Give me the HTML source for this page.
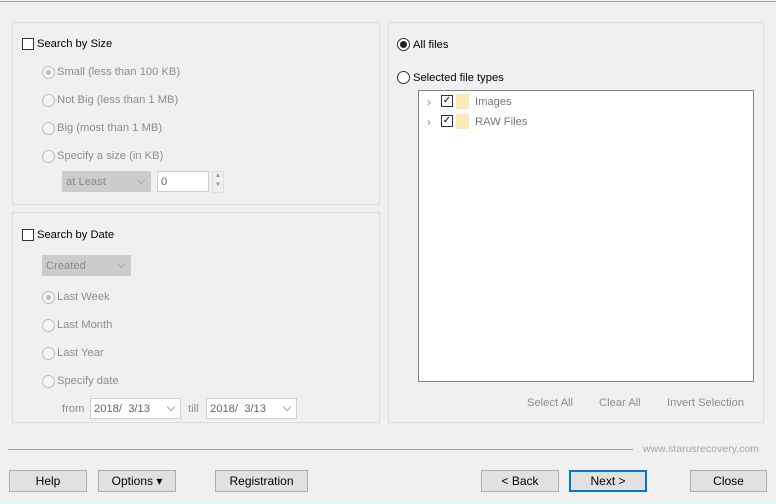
<!DOCTYPE html>
<html><head><style>
body{margin:0;width:776px;height:504px;background:#f0f0f0;font-family:"Liberation Sans",sans-serif;font-size:11.2px;color:#000;position:relative;overflow:hidden}
.a{position:absolute;white-space:nowrap;line-height:16px}
.panel{position:absolute;border:1px solid #dcdcdc;box-sizing:border-box}
.cb{position:absolute;width:12px;height:12px;border:1px solid #333;background:#fff;box-sizing:border-box}
.rd{position:absolute;width:13px;height:13px;border:1px solid #bcbcbc;border-radius:50%;box-sizing:border-box;background:#f4f4f4}
.g{color:#8d8d8d}
.btn{position:absolute;height:22px;border:1px solid #adadad;background:#e1e1e1;box-sizing:border-box;text-align:center;line-height:21px;font-size:12px}
.sel{position:absolute;height:21px;border:1px solid #cfcfcf;box-sizing:border-box;background:#fff;color:#7a7a7a;padding-left:3px;line-height:20px}
.chev{position:absolute;right:6px;top:5px;width:5px;height:5px;border-right:1px solid #aaa;border-bottom:1px solid #aaa;transform:rotate(45deg)}
</style></head><body>
<div class="a" style="left:0;top:1px;width:776px;height:1px;background:#a0a0a0"></div>

<div class="panel" style="left:12px;top:22px;width:368px;height:183px"></div>
<div class="cb" style="left:22px;top:38px"></div><div class="a" style="left:37px;top:36px">Search by Size</div>
<div class="rd" style="left:42px;top:66px"><div style="position:absolute;left:3px;top:3px;width:5px;height:5px;border-radius:50%;background:#bcbcbc"></div></div><div class="a g" style="left:57px;top:64px">Small (less than 100 KB)</div>
<div class="rd" style="left:42px;top:94px"></div><div class="a g" style="left:57px;top:92px">Not Big (less than 1 MB)</div>
<div class="rd" style="left:42px;top:122px"></div><div class="a g" style="left:57px;top:120px">Big (most than 1 MB)</div>
<div class="rd" style="left:42px;top:150px"></div><div class="a g" style="left:57px;top:148px">Specify a size (in KB)</div>
<div class="sel" style="left:62px;top:171px;width:89px;background:#cccccc;border-color:#cccccc;color:#888">at Least<div class="chev"></div></div>
<div class="sel" style="left:157px;top:171px;width:52px;color:#666">0</div>
<div class="a g" style="left:212px;top:171px;width:10px;height:20px;border:1px solid #ddd;font-size:6px;text-align:center;line-height:9px">▲<br>▼</div>

<div class="panel" style="left:12px;top:212px;width:368px;height:211px"></div>
<div class="cb" style="left:22px;top:229px"></div><div class="a" style="left:37px;top:227px">Search by Date</div>
<div class="sel" style="left:42px;top:255px;width:89px;background:#cccccc;border-color:#cccccc;color:#888">Created<div class="chev"></div></div>
<div class="rd" style="left:42px;top:291px"><div style="position:absolute;left:3px;top:3px;width:5px;height:5px;border-radius:50%;background:#bcbcbc"></div></div><div class="a g" style="left:57px;top:289px">Last Week</div>
<div class="rd" style="left:42px;top:319px"></div><div class="a g" style="left:57px;top:317px">Last Month</div>
<div class="rd" style="left:42px;top:347px"></div><div class="a g" style="left:57px;top:345px">Last Year</div>
<div class="rd" style="left:42px;top:375px"></div><div class="a g" style="left:57px;top:373px">Specify date</div>
<div class="a g" style="left:62px;top:401px">from</div>
<div class="sel" style="left:90px;top:398px;width:91px;color:#666">2018/ &nbsp;3/13<div class="chev"></div></div>
<div class="a g" style="left:188px;top:401px">till</div>
<div class="sel" style="left:206px;top:398px;width:91px;color:#666">2018/ &nbsp;3/13<div class="chev"></div></div>

<div class="panel" style="left:388px;top:22px;width:376px;height:401px"></div>
<div class="rd" style="left:397px;top:38px;border-color:#333;background:#fff"><div style="position:absolute;left:2px;top:2px;width:7px;height:7px;border-radius:50%;background:#222"></div></div><div class="a" style="left:413px;top:37px">All files</div>
<div class="rd" style="left:397px;top:71px;border-color:#333;background:#fff"></div><div class="a" style="left:413px;top:70px">Selected file types</div>
<div class="a" style="left:418px;top:90px;width:336px;height:292px;border:1px solid #828282;background:#fff;box-sizing:border-box"></div>
<div class="a g" style="left:427px;top:94px;font-size:12px">›</div>
<div class="cb" style="left:441px;top:95px;font-size:10px;line-height:10px;text-align:center">✓</div>
<div class="a" style="left:456px;top:94px;width:13px;height:15px;background:#fbeab4"></div>
<div class="a g" style="left:475px;top:94px;color:#777">Images</div>
<div class="a g" style="left:427px;top:114px;font-size:12px">›</div>
<div class="cb" style="left:441px;top:115px;font-size:10px;line-height:10px;text-align:center">✓</div>
<div class="a" style="left:456px;top:114px;width:13px;height:15px;background:#fbeab4"></div>
<div class="a g" style="left:475px;top:114px;color:#777">RAW Files</div>
<div class="a g" style="left:527px;top:395px">Select All</div>
<div class="a g" style="left:599px;top:395px">Clear All</div>
<div class="a g" style="left:667px;top:395px">Invert Selection</div>

<div class="a" style="left:8px;top:449px;width:625px;height:1px;background:#a0a0a0"></div>
<div class="a" style="left:643px;top:441px;color:#a8a8a8;font-size:10.5px">www.starusrecovery.com</div>

<div class="btn" style="left:9px;top:470px;width:78px">Help</div>
<div class="btn" style="left:98px;top:470px;width:78px">Options ▾</div>
<div class="btn" style="left:215px;top:470px;width:93px">Registration</div>
<div class="btn" style="left:481px;top:470px;width:78px">&lt; Back</div>
<div class="btn" style="left:569px;top:470px;width:78px;border:2px solid #0078d7;line-height:19px">Next &gt;</div>
<div class="btn" style="left:690px;top:470px;width:77px">Close</div>
<div class="a" style="left:0;top:502px;width:776px;height:2px;background:#dff6fb"></div>
</body></html>
